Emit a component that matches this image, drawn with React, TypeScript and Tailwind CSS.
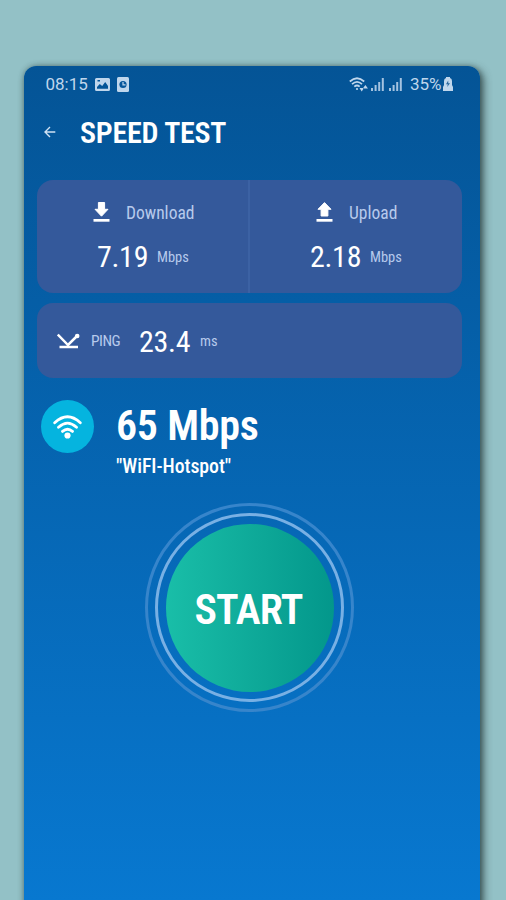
import React from "react";

const condensed = "font-['Roboto_Condensed','Roboto',sans-serif] whitespace-nowrap";

function TransferIcon({ up = false }: { up?: boolean }) {
  return (
    <svg width="17" height="20" viewBox="0 0 17 20" fill="#fff" className="shrink-0">
      {up ? (
        <path d="M8.5 .6 15 7.3H11.9V14H5.1V7.3H2Z" stroke="#fff" strokeWidth="1" strokeLinejoin="round" />
      ) : (
        <path d="M5.4 .5H11.6V7.3H15L8.5 14.2 2 7.3H5.4Z" stroke="#fff" strokeWidth="1" strokeLinejoin="round" />
      )}
      <rect x="0.5" y="17" width="16" height="2.7" />
    </svg>
  );
}

function Signal() {
  return (
    <svg width="14" height="13" viewBox="0 0 14 13" fill="#a5c3e0" className="shrink-0">
      <rect x="0" y="10" width="2" height="3" />
      <rect x="3.6" y="7" width="2" height="6" />
      <rect x="7.2" y="4" width="2" height="9" />
      <rect x="10.8" y="0" width="2" height="13" />
    </svg>
  );
}

function StatusBar() {
  return (
    <div className="flex h-[36px] items-center pl-[21.5px] pr-[27px] text-[#bfd6ec]">
      <span className="w-[49px] font-['Roboto',sans-serif] text-[17px] leading-[20px]">08:15</span>
      <svg width="15" height="13" viewBox="0 0 15 13" className="shrink-0">
        <path fillRule="evenodd" fill="#bfd6ec" d="M1.5 0H13.5Q15 0 15 1.5V11.5Q15 13 13.5 13H1.5Q0 13 0 11.5V1.5Q0 0 1.5 0ZM2 10.8H13V8L10.2 4 7.2 8 4.8 6 2 9ZM2.5 3.5H5V2H2.5Z" />
      </svg>
      <svg width="12" height="15" viewBox="0 0 12 15" className="ml-[7px] shrink-0">
        <rect width="12" height="15" rx="1.5" fill="#bfd6ec" />
        <circle cx="6" cy="7.5" r="3.6" fill="#07579b" />
        <path d="M6 5V7.8H8.5" fill="none" stroke="#bfd6ec" strokeWidth="1.2" />
      </svg>
      <div className="flex-1" />
      <svg width="19" height="15" viewBox="0 0 19 15" fill="none" stroke="#bfd6ec" strokeWidth="1.7" className="shrink-0">
        <path d="M.8 4.5Q8 -2 15.2 4.5M3 7.1Q8 2.6 13 7.1M5.3 9.7Q8 7.3 10.7 9.7" />
        <circle cx="8" cy="12" r="1.1" fill="#bfd6ec" stroke="none" />
        <path d="M10.5 11 12.7 14.5 15 11ZM13.8 11.5 16.4 8 19 11.5Z" fill="#bfd6ec" stroke="none" />
      </svg>
      <div className="ml-[3.5px] flex gap-[4px] pt-[1px]">
        <Signal />
        <Signal />
      </div>
      <span className="ml-[7px] w-[33px] whitespace-nowrap font-['Roboto',sans-serif] text-[17px] leading-[20px]">35%</span>
      <svg width="10" height="14" viewBox="0 0 10 14" className="shrink-0">
        <path d="M3 0H7V1Q9 1.5 9 4V8L10 10V14H0V10L1 8V4Q1 1.5 3 1Z" fill="#bfd6ec" />
        <path d="M5.2 3.5 3 7.2H4.8L4.2 10 7 6.2H5.3Z" fill="#28669c" />
      </svg>
    </div>
  );
}

function Transfer({ label, value, up = false }: { label: string; value: string; up?: boolean }) {
  return (
    <div className={up ? "flex-1 pl-[60px]" : "w-[213px] border-r-2 border-[#3c62a4] pl-[56px]"}>
      <div className={up ? "flex h-[24px] items-center pl-[6px]" : "flex h-[24px] items-center"}>
        <TransferIcon up={up} />
        <span className={`${condensed} ml-[16px] pt-[2px] text-[17.5px] leading-[24px] text-[#b7caec]`}>{label}</span>
      </div>
      <div className={up ? "mt-[13px] flex h-[40px] items-center" : "mt-[13px] flex h-[40px] items-center pl-[4px]"}>
        <span className={`${condensed} w-[52px] text-[30px] leading-[40px] tracking-[-0.3px] text-white`}>{value}</span>
        <span className={`${condensed} ml-[8px] pt-[1px] text-[14.5px] leading-[20px] text-[#b7caec]`}>Mbps</span>
      </div>
    </div>
  );
}

export default function App() {
  return (
    <div className="h-[900px] w-[506px] overflow-hidden bg-[#93c1c6] pl-[24px] pt-[66px]">
      <main className="h-[860px] w-[456px] rounded-t-[12px] bg-linear-to-b from-[#045496] to-[#0878d0] to-[97%] shadow-[3px_3px_8px_0px_rgba(40,60,60,0.85),0_0_5px_rgba(40,60,60,0.35)]">
        <StatusBar />
        <header className="flex h-[60px] items-center pl-[20px]">
          <svg width="12" height="12" viewBox="0 0 12 12" fill="none" stroke="#d0e2f4" strokeWidth="1.4" className="shrink-0">
            <path d="M11.3 6H1M6 1 1 6 6 11" />
          </svg>
          <h1 className={`${condensed} ml-[24px] pt-[2px] text-[30px] font-semibold leading-[40px] tracking-[-0.25px] text-white`}>SPEED TEST</h1>
        </header>

        <section className="ml-[13px] mt-[18px] flex h-[113px] w-[425px] overflow-hidden rounded-[16px] bg-[#34599b] *:pt-[20px]">
          <Transfer label="Download" value="7.19" />
          <Transfer up label="Upload" value="2.18" />
        </section>

        <section className="ml-[13px] mt-[10px] flex h-[75px] w-[425px] items-center rounded-[16px] bg-[#34599b] pl-[20px]">
          <svg width="23" height="16" viewBox="0 0 23 16" className="shrink-0">
            <path d="M.8 1.5 11 12 20 3M2.5 14H21" fill="none" stroke="#fff" strokeWidth="2.5" />
            <circle cx="20.2" cy="3" r="2.3" fill="#fff" />
          </svg>
          <span className={`${condensed} ml-[11px] w-[30px] text-[15.5px] leading-[20px] tracking-[-0.5px] text-[#b7caec]`}>PING</span>
          <span className={`${condensed} ml-[18px] w-[52px] pt-[2px] text-[30px] leading-[40px] tracking-[-0.3px] text-white`}>23.4</span>
          <span className={`${condensed} ml-[9px] pt-[2px] text-[14.5px] leading-[20px] text-[#b7caec]`}>ms</span>
        </section>

        <section className="flex pl-[17px] pt-[22px]">
          <div className="flex size-[53px] items-center justify-center rounded-full bg-[#05b4df]">
            <svg width="29" height="24" viewBox="0 0 29 24" fill="none" stroke="#fff" strokeWidth="2.8" strokeLinecap="round">
              <path d="M1.7 7.8Q14.5 -4.2 27.3 7.8M5.5 12.2Q14.5 4 23.5 12.2M9.5 16.4Q14.5 12 19.5 16.4" />
              <circle cx="14.5" cy="20.5" r="3.1" fill="#fff" stroke="none" />
            </svg>
          </div>
          <div className="ml-[22px] h-[80px] pt-[1px]">
            <p className={`${condensed} text-[42px] font-semibold leading-[50px] tracking-[-0.25px] text-white`}>65 Mbps</p>
            <p className={`${condensed} mt-[4px] text-[19.8px] font-medium leading-[24px] tracking-[-0.05px] text-white`}>"WiFI-Hotspot"</p>
          </div>
        </section>

        <div className="ml-[121px] mt-[23px] flex size-[209px] items-center justify-center rounded-full border-[3px] border-[#3785cb]">
          <div className="flex size-[189px] items-center justify-center rounded-full border-[3px] border-[#78b0e4]">
            <button className={`${condensed} size-[168px] rounded-full bg-linear-to-r from-[#19bea8] to-[#03978b] pr-[2px] pt-[4px] text-[42px] font-semibold tracking-[-0.8px] text-white`}>
              START
            </button>
          </div>
        </div>
      </main>
    </div>
  );
}
